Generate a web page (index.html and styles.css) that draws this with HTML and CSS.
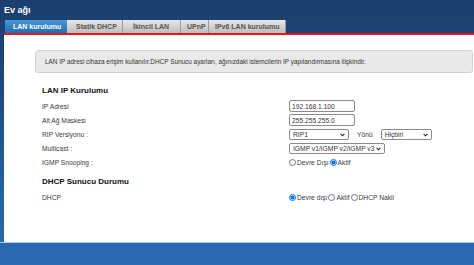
FILE: index.html
```html
<!DOCTYPE html>
<html lang="tr">
<head>
  <meta charset="UTF-8" />
  <title>Ev ağı</title>
  <link rel="stylesheet" href="styles.css">
</head>
<body>

  <div class="header">Ev ağı</div>

  <div class="tabs">
    <div class="tab active">LAN kurulumu</div>
    <div class="tab">Statik DHCP</div>
    <div class="tab">İkincil LAN</div>
    <div class="tab">UPnP</div>
    <div class="tab">IPv6 LAN kurulumu</div>
  </div>

  <div class="panel">
    <div class="info">LAN IP adresi cihaza erişim kullanılır.DHCP Sunucu ayarları, ağınızdaki istemcilerin IP yapılandırmasına ilişkindir.</div>

    <h3 class="section">LAN IP Kurulumu</h3>
    <div class="row">
      <label>IP Adresi</label>
      <input type="text" value="192.168.1.100">
    </div>
    <div class="row">
      <label>Alt Ağ Maskesi</label>
      <input type="text" value="255.255.255.0">
    </div>
    <div class="row">
      <label>RIP Versiyonu :</label>
      <span class="select sel-rip">
        <select><option>RIP1</option></select>
        <svg class="chev" viewBox="0 0 6 4"><path d="M0.7 0.7 L3 3 L5.3 0.7" /></svg>
      </span>
      <span class="dir">Yönü</span>
      <span class="select sel-dir">
        <select><option>Hiçbiri</option></select>
        <svg class="chev" viewBox="0 0 6 4"><path d="M0.7 0.7 L3 3 L5.3 0.7" /></svg>
      </span>
    </div>
    <div class="row">
      <label>Multicast :</label>
      <span class="select sel-multi">
        <select><option>IGMP v1/IGMP v2/IGMP v3</option></select>
        <svg class="chev" viewBox="0 0 6 4"><path d="M0.7 0.7 L3 3 L5.3 0.7" /></svg>
      </span>
    </div>
    <div class="row">
      <label>IGMP Snooping :</label>
      <span class="radios">
        <input type="radio" name="igmp"><span>Devre Dışı</span>
        <input type="radio" name="igmp" checked><span>Aktif</span>
      </span>
    </div>

    <h3 class="section second">DHCP Sunucu Durumu</h3>
    <div class="row">
      <label>DHCP</label>
      <span class="radios">
        <input type="radio" name="dhcp" checked><span>Devre dışı</span>
        <input type="radio" name="dhcp"><span>Aktif</span>
        <input type="radio" name="dhcp"><span>DHCP Nakil</span>
      </span>
    </div>
  </div>

  <div class="footer"></div>

</body>
</html>
```

FILE: styles.css
```css
* { box-sizing: border-box; }
html, body { height: 265px; }
body {
  margin: 0;
  display: flex;
  flex-direction: column;
  font-family: 'Liberation Sans', Arial, sans-serif;
  font-size: 6.7px;
  color: #333;
  overflow: hidden;
  background: linear-gradient(to bottom, #1a3f6f 0px, #1c4577 60px, #2562a6 200px, #2a6bb4 265px);
}

.header {
  flex: none;
  height: 20px;
  padding: 4px 0 0 4px;
  color: #fff;
  font-size: 9px;
  font-weight: bold;
  line-height: 12px;
}

.tabs {
  flex: none;
  display: flex;
  height: 13px;
  margin-left: 5px;
}

.tab {
  height: 13px;
  line-height: 13px;
  padding: 0 0 0 9px;
  font-size: 7px;
  font-weight: bold;
  color: #555;
  background: linear-gradient(to bottom, #e8e8e8, #bdbdbd);
  border-right: 1px solid #9a9a9a;
}
.tab:nth-child(1) { width: 62px; padding-left: 8px; }
.tab:nth-child(2) { width: 56px; }
.tab:nth-child(3) { width: 58px; padding-left: 10px; }
.tab:nth-child(4) { width: 28px; padding-left: 6px; }
.tab:nth-child(5) { width: 77px; padding-left: 6px; }

.tab.active {
  color: #fff;
  background: linear-gradient(to bottom, #4a96d6, #1f6cb0);
  border-right: none;
}

.panel {
  flex: none;
  height: 209px;
  margin-left: 4px;
  background: #fff;
  border-top: 2px solid #e01818;
  padding-top: 15px;
}

.info {
  margin-left: 31px;
  margin-right: 1px;
  height: 23px;
  line-height: 21px;
  padding-left: 9px;
  font-size: 6.4px;
  background: #e9e9e9;
  border: 1px solid #d2d2d2;
  border-radius: 3px;
  color: #333;
}

.section {
  margin: 12px 0 2px 38px;
  height: 12px;
  line-height: 12px;
  font-size: 8px;
  color: #111;
}
.section.second { margin-top: 7px; }

.row {
  display: flex;
  align-items: center;
  height: 14px;
  margin-left: 38px;
}

.row label {
  width: 247px;
  flex: none;
  color: #3a3a3a;
}

.row input[type=text] {
  width: 66px;
  height: 12px;
  padding: 0 2px;
  font-family: inherit;
  font-size: 6.7px;
  color: #333;
  border: 1px solid #8a8a8a;
  border-radius: 2px;
}

.select {
  position: relative;
  display: inline-flex;
  height: 11px;
}
.select select {
  appearance: none;
  width: 100%;
  height: 11px;
  padding: 0 0 0 3px;
  font-family: inherit;
  font-size: 6.7px;
  line-height: 9px;
  color: #333;
  border: 1px solid #8a8a8a;
  border-radius: 2px;
  background: #fff;
}
.chev {
  position: absolute;
  right: 4px;
  top: 4px;
  width: 5px;
  height: 4px;
  fill: none;
  stroke: #222;
  stroke-width: 1.3;
  pointer-events: none;
}
.sel-rip { width: 60px; }
.sel-dir { width: 51px; }
.sel-multi { width: 96px; }

.dir {
  margin: 0 8px 0 8px;
  color: #3a3a3a;
}

.radios {
  display: flex;
  align-items: center;
  color: #3a3a3a;
}
.radios input {
  width: 7px;
  height: 7px;
  margin: 0 1px 0 0;
}
.radios span { margin-right: 1px; }

.footer {
  flex: none;
  height: 23px;
  border-top: 1px solid #a9cbe9;
}
```
